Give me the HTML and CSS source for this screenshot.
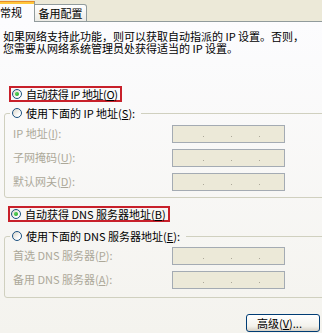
FILE: index.html
```html
<!DOCTYPE html>
<html lang="zh-CN">
<head>
<meta charset="utf-8">
<title>Internet 协议 (TCP/IP) 属性</title>
<link rel="stylesheet" href="styles.css">
</head>
<body>
<div class="dialog">
  <div class="tabs">
    <div class="tab tab-active">常规</div>
    <div class="tab tab-idle">备用配置</div>
    <div class="tab-fill"></div>
  </div>
  <div class="page">
    <div class="intro">
      <p class="intro-line">如果网络支持此功能，则可以获取自动指派的 IP 设置。否则，</p>
      <p class="intro-line">您需要从网络系统管理员处获得适当的 IP 设置。</p>
    </div>

    <div class="mark mark-ip"><span class="radio checked"></span><span class="opt">自动获得 IP 地址(<u>O</u>)</span></div>

    <fieldset class="group group-ip">
      <legend class="legend"><span class="radio"></span><span class="opt">使用下面的 IP 地址(<u>S</u>):</span></legend>
      <div class="rows rows-ip">
        <span class="lbl">IP 地址(<u>I</u>):</span>
        <div class="field"><i></i><i></i><i></i></div>
        <span class="lbl">子网掩码(<u>U</u>):</span>
        <div class="field"><i></i><i></i><i></i></div>
        <span class="lbl">默认网关(<u>D</u>):</span>
        <div class="field"><i></i><i></i><i></i></div>
      </div>
    </fieldset>

    <div class="mark mark-dns"><span class="radio checked"></span><span class="opt">自动获得 DNS 服务器地址(<u>B</u>)</span></div>

    <fieldset class="group group-dns">
      <legend class="legend"><span class="radio"></span><span class="opt">使用下面的 DNS 服务器地址(<u>E</u>):</span></legend>
      <div class="rows rows-dns">
        <span class="lbl">首选 DNS 服务器(<u>P</u>):</span>
        <div class="field"><i></i><i></i><i></i></div>
        <span class="lbl">备用 DNS 服务器(<u>A</u>):</span>
        <div class="field"><i></i><i></i><i></i></div>
      </div>
    </fieldset>

    <div class="actions"><button class="btn" type="button">高级(<u>V</u>)...</button></div>
  </div>
</div>
</body>
</html>
```
FILE: styles.css
```css
* { box-sizing: border-box; }
html, body { margin: 0; padding: 0; }
body {
  width: 322px;
  height: 333px;
  overflow: hidden;
  background: #ECE9D8;
  font-family: "Noto Sans CJK SC", sans-serif;
  font-size: 11px;
  color: #000;
}
.dialog {
  width: 322px;
  height: 333px;
  display: flex;
  flex-direction: column;
}

/* tabs */
.tabs {
  display: flex;
  align-items: flex-start;
  height: 22px;
  flex: none;
  background: #ECE9D8;
}
.tab {
  white-space: nowrap;
  text-align: center;
  line-height: 15px;
  flex: none;
}
.tab-active {
  width: 47px;
  height: 21px;
  margin-top: 1px;
  margin-left: -12px;
  padding-top: 3px;
  border-top: 1px solid #E68B2C;
  border-right: 1px solid #919B9C;
  background: linear-gradient(#FFC73C 0 2px, #FCFCFE 2px);
}
.tab-idle {
  width: 52px;
  height: 18px;
  margin-top: 4px;
  padding-top: 1px;
  border: 1px solid #919B9C;
  border-left: none;
  border-radius: 0 3px 0 0;
  background: linear-gradient(#FFFFFF, #ECEBE6);
}
.tab-fill {
  flex: 1;
  height: 22px;
  border-bottom: 1px solid #919B9C;
}

/* page */
.page {
  flex: 1;
  display: flex;
  flex-direction: column;
  align-items: flex-start;
  background: linear-gradient(#FCFCFE, #F4F3EE);
}
.intro {
  margin: 9px 0 0 3px;
  display: flex;
  flex-direction: column;
  gap: 1px;
}
.intro-line {
  margin: 0;
  height: 11px;
  line-height: 11px;
  white-space: nowrap;
}

.radio {
  flex: none;
  width: 10px;
  height: 10px;
  border-radius: 50%;
  border: 1px solid #1C5180;
  background: linear-gradient(135deg, #DCD7CB, #FFFFFF 75%);
  display: flex;
  align-items: center;
  justify-content: center;
}
.radio.checked::after {
  content: "";
  width: 4px;
  height: 4px;
  border-radius: 50%;
  background: radial-gradient(circle at 35% 35%, #55D35A, #21A121);
}
.opt { white-space: nowrap; line-height: 12px; }

.mark {
  display: flex;
  align-items: center;
  gap: 4px;
  height: 16px;
  padding: 0 2px 0 1px;
  border: 2px solid #C8202A;
}
.mark-ip { margin: 32px 0 0 9px; }
.mark-ip .opt { letter-spacing: -0.4px; }
.mark-dns { margin: 8px 0 0 8px; }

.group {
  width: 330px;
  margin: 0 0 0 4px;
  padding: 0;
  border: 1px solid #D0D0BF;
  border-radius: 3px;
  min-width: 0;
}
.group-ip { margin-top: 4px; }
.group-dns { margin-top: 7px; }
.legend {
  display: flex;
  align-items: center;
  gap: 4px;
  height: 14px;
  margin-left: 5px;
  padding: 0 6px 0 2px;
}
.rows {
  display: grid;
  grid-template-columns: 159px 113px;
  grid-auto-rows: 18px;
  row-gap: 6px;
  padding-left: 8px;
}
.rows-ip { padding-top: 5px; padding-bottom: 6px; }
.rows-dns { padding-top: 4px; padding-bottom: 8px; }
.lbl {
  color: #ACA899;
  align-self: center;
  white-space: nowrap;
  line-height: 12px;
  margin-top: -2px;
}
.field {
  display: flex;
  justify-content: space-between;
  align-items: center;
  padding: 0 24px 0 30px;
  border: 1px solid #A4ABB3;
  background: #ECE9D8;
}
.field i {
  width: 1px;
  height: 1px;
  margin-top: 4px;
  background: #ACA899;
}

.actions {
  align-self: stretch;
  display: flex;
  justify-content: flex-end;
  padding-right: 2px;
  margin-top: 16px;
}
.btn {
  width: 74px;
  height: 18px;
  padding: 0 0 0 10px;
  text-align: left;
  font: inherit;
  line-height: 14px;
  color: #000;
  border: 1px solid #003C74;
  border-radius: 3px;
  background: linear-gradient(#FFFFFF, #F3F2EC 70%, #D6D0C5);
}
```
